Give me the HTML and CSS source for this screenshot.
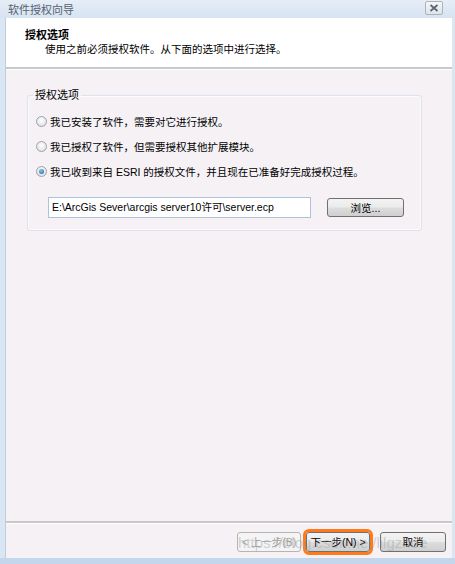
FILE: index.html
```html
<!DOCTYPE html>
<html lang="zh">
<head>
<meta charset="utf-8">
<title>软件授权向导</title>
<link rel="stylesheet" href="styles.css">
</head>
<body>
<div class="window">
  <div class="titlebar">
    <span class="title">软件授权向导</span>
    <span class="close">
      <svg width="10" height="8" viewBox="0 0 10 8"><path d="M1.5 1 L8.5 7 M8.5 1 L1.5 7" stroke="#5e6672" stroke-width="1.8" fill="none"/></svg>
    </span>
  </div>
  <div class="frame">
    <div class="header">
      <div class="h-title">授权选项</div>
      <div class="h-sub">使用之前必须授权软件。从下面的选项中进行选择。</div>
    </div>
    <div class="body">
      <fieldset class="group">
        <legend>授权选项</legend>
        <label class="radio"><span class="dot"></span>我已安装了软件，需要对它进行授权。</label>
        <label class="radio"><span class="dot"></span>我已授权了软件，但需要授权其他扩展模块。</label>
        <label class="radio"><span class="dot on"></span>我已收到来自 ESRI 的授权文件，并且现在已准备好完成授权过程。</label>
        <div class="filerow">
          <div class="input">E:\ArcGis Sever\arcgis server10许可\server.ecp</div>
          <div class="btn browse">浏览...</div>
        </div>
      </fieldset>
    </div>
    <div class="footer">
      <div class="btn nav disabled">&lt; 上一步(B)</div>
      <div class="btn nav next">下一步(N) &gt;</div>
      <div class="btn nav cancel">取消</div>
      <div class="watermark">https://blog.csdn.net/lilgzhoe</div>
    </div>
  </div>
  <div class="bottombar"></div>
</div>
</body>
</html>
```
FILE: styles.css
```css
html, body {
  margin: 0;
  padding: 0;
  background: #ffffff;
}
body {
  width: 455px;
  height: 564px;
  overflow: hidden;
  font-family: "Liberation Sans", "Noto Sans CJK SC", sans-serif;
  font-size: 10.5px;
  color: #000;
}
.window {
  width: 455px;
  height: 564px;
  display: flex;
  flex-direction: column;
  background: #dbe6f3;
}
.titlebar {
  height: 18px;
  flex: none;
  display: flex;
  align-items: center;
  justify-content: space-between;
  padding: 0 12px 0 8px;
  background: linear-gradient(#e6eef7, #d7e3f1);
}
.title {
  color: #55616f;
  font-size: 11px;
}
.close {
  width: 18px;
  height: 14px;
  box-sizing: border-box;
  border: 1px solid #aab3be;
  border-radius: 2px;
  background: linear-gradient(#f4f6f8, #dfe4ea);
  display: flex;
  align-items: center;
  justify-content: center;
  margin-top: -2px;
}
.frame {
  flex: 1;
  margin: 0 3px 0 5px;
  border-left: 1px solid #b9cde5;
  display: flex;
  flex-direction: column;
  background: #f5f1f5;
}
.header {
  background: #fff;
  height: 51px;
  flex: none;
  padding: 10px 0 0 19px;
  box-sizing: border-box;
  border-bottom: 2px solid #c9c9c9;
  box-shadow: 0 1px 0 #fff;
}
.h-title {
  font-weight: bold;
  font-size: 11px;
  line-height: 14px;
}
.h-sub {
  padding-left: 20px;
  line-height: 14px;
}
.body {
  flex: 1;
  padding: 19px 30px 0 21px;
}
.group {
  margin: 0;
  border: 1px solid #dde3ec;
  border-radius: 3px;
  padding: 7px 8px 10px 8px;
  height: 143px;
  box-sizing: border-box;
  box-shadow: inset 0 0 0 1px #fbfbfd;
}
.group legend {
  padding: 0 2px;
  margin-left: -3px;
  line-height: 14px;
  font-size: 11px;
}
.radio {
  display: flex;
  align-items: center;
  height: 25px;
  gap: 3px;
  white-space: nowrap;
}
.dot {
  flex: none;
  width: 11px;
  height: 11px;
  border-radius: 50%;
  border: 1px solid #9ea3a9;
  background: radial-gradient(circle at 50% 40%, #ffffff, #d6d8dc);
  box-sizing: border-box;
  position: relative;
}
.dot.on::after {
  content: "";
  position: absolute;
  left: 2px;
  top: 2px;
  width: 5px;
  height: 5px;
  border-radius: 50%;
  background: radial-gradient(circle at 40% 35%, #7fc6f0, #1f5f9e);
}
.filerow {
  display: flex;
  align-items: center;
  margin-top: 13px;
  padding-left: 12px;
  gap: 16px;
}
.input {
  width: 263px;
  height: 21px;
  box-sizing: border-box;
  border: 1px solid #abc3dd;
  background: #fff;
  padding: 2px 3px;
  line-height: 15px;
  white-space: nowrap;
  overflow: hidden;
}
.btn {
  height: 20px;
  box-sizing: border-box;
  border: 1px solid #707070;
  border-radius: 3px;
  background: linear-gradient(#f3f3f3 0%, #ebebeb 48%, #dddddd 52%, #cfcfcf 100%);
  display: flex;
  align-items: center;
  justify-content: center;
  white-space: nowrap;
}
.browse {
  width: 77px;
  height: 19px;
}
.footer {
  flex: none;
  height: 37px;
  position: relative;
  border-top: 2px solid #c9c9c9;
  box-shadow: inset 0 1px 0 #fff;
  display: flex;
  align-items: center;
  justify-content: flex-end;
  padding: 2px 6px 0 0;
  box-sizing: border-box;
}
.nav {
  width: 64px;
  height: 20px;
}
.disabled {
  color: #a3a3a3;
  border-color: #b5b5b5;
  background: #f4f4f4;
}
.next {
  width: 64px;
  outline: 3px solid #ff7a1a;
  outline-offset: 0;
  margin: 0 10px 0 5px;
}
.cancel {
  width: 66px;
}
.watermark {
  position: absolute;
  left: 232px;
  top: 11px;
  color: rgba(150, 150, 150, 0.4);
  font-size: 15px;
  pointer-events: none;
  white-space: nowrap;
}
.bottombar {
  height: 6px;
  flex: none;
  background: #c3d6ec;
}
```
